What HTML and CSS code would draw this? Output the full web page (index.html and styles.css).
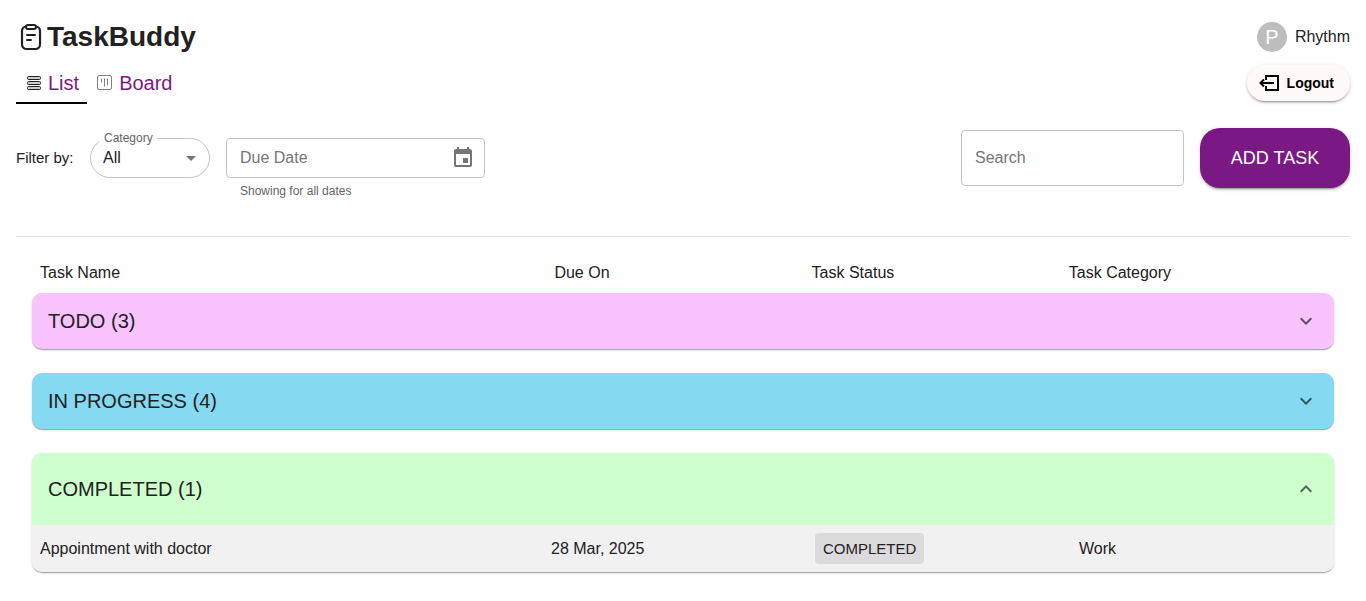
FILE: index.html
```html
<!DOCTYPE html>
<html lang="en">
<head>
<meta charset="utf-8">
<meta name="viewport" content="width=device-width, initial-scale=1">
<title>TaskBuddy</title>
<link rel="stylesheet" href="styles.css">
</head>
<body>
<header class="header">
  <div class="header-main">
    <h1 class="brand">
      <svg class="brand-icon" viewBox="0 0 30 30" fill="none" stroke="currentColor" stroke-width="2" stroke-linecap="round" stroke-linejoin="round" aria-hidden="true">
        <rect x="6" y="4.500" width="18" height="22.500" rx="4.500" stroke-width="2.200"/>
        <rect x="10" y="3" width="10" height="4" rx="2" fill="#fff"/>
        <path d="M11 13h8M11 18h4"/>
      </svg>
      <span>TaskBuddy</span>
    </h1>
    <nav class="tabs" aria-label="Views">
      <a class="tab tab-active" href="#list" aria-current="page">
        <svg class="tab-icon" viewBox="0 0 16 16" fill="#ccc" stroke="#222" aria-hidden="true">
          <rect x="1.500" y="1.500" width="13" height="3" rx="1"/>
          <rect x="1.500" y="6.500" width="13" height="3" rx="1"/>
          <rect x="1.500" y="11.500" width="13" height="3" rx="1"/>
        </svg>
        <span>List</span>
      </a>
      <a class="tab" href="#board">
        <svg class="tab-icon" viewBox="0 0 16 16" fill="none" stroke="#808080" aria-hidden="true">
          <rect x="0.500" y="0.500" width="14" height="14" rx="1.500"/>
          <path d="M4.500 3.500v4M7.500 3.500v8M10.500 3.500v7"/>
        </svg>
        <span>Board</span>
      </a>
    </nav>
  </div>
  <div class="account">
    <div class="user"><span class="avatar">P</span><span>Rhythm</span></div>
    <button class="logout" type="button">
      <svg class="logout-icon" viewBox="0 0 20 20" fill="none" stroke="currentColor" stroke-width="2" aria-hidden="true">
        <path d="M7 7V3h12v14H7v-4M15 10H2M5 6.500L1.500 10 5 13.500"/>
      </svg>
      <span>Logout</span>
    </button>
  </div>
</header>

<section class="toolbar" aria-label="Filters">
  <div class="filters">
    <span class="filter-label">Filter by:</span>
    <div class="category">
      <label class="category-label" for="category">Category</label>
      <select class="category-select" id="category"><option>All</option><option>Work</option><option>Personal</option></select>
      <svg class="category-arrow" viewBox="0 0 24 24" aria-hidden="true"><path fill="#757575" d="m7 10 5 5 5-5z"/></svg>
    </div>
    <div class="date">
      <div class="date-field">
        <input class="date-input" id="due" type="text" placeholder="Due Date" aria-label="Due Date" aria-describedby="due-help">
        <button class="date-button" type="button" aria-label="Choose date">
          <svg viewBox="0 0 24 24" aria-hidden="true"><path fill="#757575" d="M17 12h-5v5h5v-5zM16 1v2H8V1H6v2H5c-1.110 0-2 .9-2 2v14c0 1.100.89 2 2 2h14c1.100 0 2-.9 2-2V5c0-1.100-.9-2-2-2h-1V1h-2zm3 18H5V8h14v11z"/></svg>
        </button>
      </div>
      <p class="date-help" id="due-help">Showing for all dates</p>
    </div>
  </div>
  <div class="actions">
    <input class="search" type="search" placeholder="Search" aria-label="Search">
    <button class="add" type="button">ADD TASK</button>
  </div>
</section>

<main class="tasks">
  <table class="columns">
    <thead><tr><th scope="col">Task Name</th><th scope="col">Due On</th><th scope="col">Task Status</th><th scope="col">Task Category</th></tr></thead>
  </table>
  <div class="groups">
    <section class="group group-todo">
      <button class="group-head" type="button" aria-expanded="false">
        <span>TODO (3)</span>
        <svg class="chevron" viewBox="0 0 24 24" aria-hidden="true"><path d="M16.590 8.590 12 13.170 7.410 8.590 6 10l6 6 6-6z"/></svg>
      </button>
    </section>
    <section class="group group-progress">
      <button class="group-head" type="button" aria-expanded="false">
        <span>IN PROGRESS (4)</span>
        <svg class="chevron" viewBox="0 0 24 24" aria-hidden="true"><path d="M16.590 8.590 12 13.170 7.410 8.590 6 10l6 6 6-6z"/></svg>
      </button>
    </section>
    <section class="group group-completed">
      <button class="group-head group-head-open" type="button" aria-expanded="true">
        <span>COMPLETED (1)</span>
        <svg class="chevron chevron-up" viewBox="0 0 24 24" aria-hidden="true"><path d="M16.590 8.590 12 13.170 7.410 8.590 6 10l6 6 6-6z"/></svg>
      </button>
      <table class="rows">
        <tbody><tr><td>Appointment with doctor</td><td>28 Mar, 2025</td><td><span class="status">COMPLETED</span></td><td>Work</td></tr></tbody>
      </table>
    </section>
  </div>
</main>
</body>
</html>
```

FILE: styles.css
```css
* { box-sizing: border-box; }
body {
  margin: 0;
  padding: 16px;
  background: #fff;
  color: #212121;
  font: 16px/24px "Liberation Sans", Arial, sans-serif;
}
button, input, select { font: inherit; color: inherit; }
button { cursor: pointer; border: 0; }
input::placeholder { color: #757575; opacity: 1; }

.header { display: flex; justify-content: space-between; }
.brand {
  display: flex;
  align-items: center;
  gap: 1px;
  margin: 0;
  font-size: 28px;
  line-height: 42px;
}
.brand-icon { width: 30px; height: 30px; }
.tabs { display: flex; gap: 2px; }
.tab {
  display: flex;
  align-items: center;
  gap: 6px;
  padding: 10px 8px 4px;
  color: #7b1984;
  font-size: 20px;
  line-height: 30px;
  text-decoration: none;
  border-bottom: 2px solid transparent;
}
.tab-active { padding-left: 10px; border-color: #000; }
.tab-icon { width: 16px; height: 16px; }
.account { display: flex; flex-direction: column; align-items: flex-end; gap: 8px; }
.user { display: flex; align-items: center; gap: 8px; height: 41px; }
.avatar {
  display: grid;
  place-items: center;
  width: 30px;
  height: 30px;
  border-radius: 50%;
  background: #bdbdbd;
  color: #fff;
  font-size: 20px;
}
.logout {
  display: flex;
  align-items: center;
  gap: 8px;
  padding: 6px 16px 6px 12px;
  border-radius: 18px;
  background: #fff9f9;
  color: #000;
  font-size: 14px;
  font-weight: bold;
  box-shadow: 0 3px 1px -2px rgba(0,0,0,.2), 0 2px 2px rgba(0,0,0,.14), 0 1px 5px rgba(0,0,0,.12);
}
.logout-icon { width: 20px; height: 20px; }

.toolbar {
  display: flex;
  justify-content: space-between;
  gap: 16px;
  padding: 24px 0 35px;
  border-bottom: 1px solid #e0e0e0;
}
.filters { display: flex; gap: 16px; padding-top: 10px; }
.filter-label { width: 58px; font-size: 15px; line-height: 40px; white-space: nowrap; }
.category { position: relative; width: 120px; height: 40px; }
.category-label {
  position: absolute;
  top: -7px;
  left: 9px;
  padding: 0 4px 0 5px;
  background: #fff;
  color: #666;
  font-size: 12px;
  line-height: 14px;
}
.category-select {
  appearance: none;
  width: 100%;
  height: 100%;
  padding: 0 32px 0 12px;
  border: 1px solid #c4c4c4;
  border-radius: 20px;
  background: #fff;
}
.category-arrow { position: absolute; top: 8px; right: 7px; width: 24px; height: 24px; pointer-events: none; }
.date { width: 259px; }
.date-field {
  display: flex;
  align-items: center;
  height: 40px;
  padding: 0 9px 0 13px;
  border: 1px solid #c4c4c4;
  border-radius: 4px;
}
.date-input { flex: 1; min-width: 0; padding: 0; border: 0; background: none; }
.date-button { display: grid; width: 24px; height: 24px; padding: 0; background: none; }
.date-help { margin: 3px 14px 0; color: #666; font-size: 12px; line-height: 20px; }
.actions { display: flex; align-items: flex-start; gap: 16px; }
.search {
  width: 223px;
  height: 56px;
  margin-top: 2px;
  padding: 0 13px;
  border: 1px solid #c4c4c4;
  border-radius: 4px;
  appearance: none;
}
.add {
  width: 150px;
  height: 60px;
  border-radius: 20px;
  background: #7b1984;
  color: #fff;
  font-size: 18px;
  box-shadow: 0 3px 1px -2px rgba(0,0,0,.2), 0 2px 2px rgba(0,0,0,.14), 0 1px 5px rgba(0,0,0,.12);
}

.tasks { padding: 16px 16px 0; }
.columns, .rows { display: block; padding: 8px; }
.columns thead, .rows tbody { display: block; }
.columns tr, .rows tr { display: grid; align-items: center; }
.columns tr { grid-template-columns: 2fr 1fr 1fr 1fr; }
.rows tr { grid-template-columns: 511fr 264fr 264fr 247fr; }
.columns th, .rows td { padding: 0; text-align: left; font-weight: normal; }
.groups { display: flex; flex-direction: column; gap: 24px; }
.group {
  overflow: hidden;
  border-radius: 10px;
  box-shadow: 0 2px 1px -1px rgba(0,0,0,.2), 0 1px 1px rgba(0,0,0,.14), 0 1px 3px rgba(0,0,0,.12);
}
.group-todo { background: #f9c3ff; }
.group-progress { background: #85d9f1; }
.group-completed { background: #ceffcc; }
.group-head {
  display: flex;
  align-items: center;
  justify-content: space-between;
  width: 100%;
  padding: 13px 16px;
  background: none;
  font-size: 20px;
  line-height: 30px;
  text-align: left;
}
.group-head-open { padding: 21px 16px; }
.chevron { width: 24px; height: 24px; fill: #000; opacity: .6; }
.chevron-up { transform: rotate(180deg); }
.rows { background: #f1f1f1; }
.status {
  display: inline-block;
  padding: 4px 8px;
  border-radius: 4px;
  background: #dddadd;
  font-size: 15px;
  line-height: 23px;
}
```
